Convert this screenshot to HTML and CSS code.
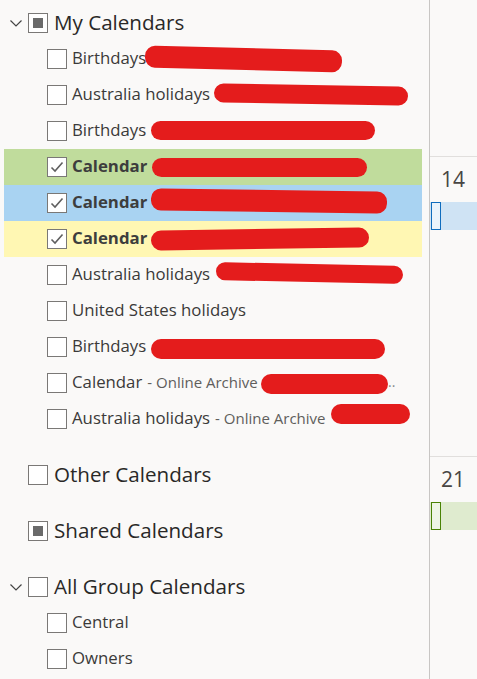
FILE: index.html
```html
<!DOCTYPE html>
<html lang="en">
<head>
  <meta charset="UTF-8">
  <title>Calendars</title>
  <link rel="stylesheet" href="styles.css">
</head>
<body>
  <div class="app">
    <aside class="folders">
      <div class="head">
        <span class="chev"><svg width="14" height="9" viewBox="0 0 14 9"><path d="M1.5 1.5 L7 7 L12.5 1.5" fill="none" stroke="#444" stroke-width="1.2"/></svg></span>
        <span class="box part"></span>
        <span class="head-label">My Calendars</span>
      </div>
      <div class="row">
        <span class="box"></span><span class="label">Birthdays</span>
        <span class="redact r1"></span>
      </div>
      <div class="row">
        <span class="box"></span><span class="label">Australia holidays</span>
        <span class="redact r2"></span>
      </div>
      <div class="row">
        <span class="box"></span><span class="label">Birthdays</span>
        <span class="redact r3"></span>
      </div>
      <div class="row green">
        <span class="box checked"><svg width="14" height="12" viewBox="0 0 14 12"><path d="M1.5 6.5 L5 10 L12.5 1.5" fill="none" stroke="#5f5f5f" stroke-width="1.6"/></svg></span><span class="label bold">Calendar</span>
        <span class="redact r4"></span>
      </div>
      <div class="row blue">
        <span class="box checked"><svg width="14" height="12" viewBox="0 0 14 12"><path d="M1.5 6.5 L5 10 L12.5 1.5" fill="none" stroke="#5f5f5f" stroke-width="1.6"/></svg></span><span class="label bold">Calendar</span>
        <span class="redact r5"></span>
      </div>
      <div class="row yellow">
        <span class="box checked"><svg width="14" height="12" viewBox="0 0 14 12"><path d="M1.5 6.5 L5 10 L12.5 1.5" fill="none" stroke="#5f5f5f" stroke-width="1.6"/></svg></span><span class="label bold">Calendar</span>
        <span class="redact r6"></span>
      </div>
      <div class="row">
        <span class="box"></span><span class="label">Australia holidays</span>
        <span class="redact r7"></span>
      </div>
      <div class="row">
        <span class="box"></span><span class="label">United States holidays</span>
      </div>
      <div class="row">
        <span class="box"></span><span class="label">Birthdays</span>
        <span class="redact r8"></span>
      </div>
      <div class="row">
        <span class="box"></span><span class="label">Calendar</span><span class="sub">- Online Archive</span>
        <span class="redact r9"></span><span class="dots">..</span>
      </div>
      <div class="row">
        <span class="box"></span><span class="label">Australia holidays</span><span class="sub">- Online Archive</span>
        <span class="redact r10"></span>
      </div>

      <div class="head gap">
        <span class="chev"></span>
        <span class="box"></span>
        <span class="head-label">Other Calendars</span>
      </div>
      <div class="head gap">
        <span class="chev"></span>
        <span class="box part"></span>
        <span class="head-label">Shared Calendars</span>
      </div>
      <div class="head gap">
        <span class="chev"><svg width="14" height="9" viewBox="0 0 14 9"><path d="M1.5 1.5 L7 7 L12.5 1.5" fill="none" stroke="#444" stroke-width="1.2"/></svg></span>
        <span class="box"></span>
        <span class="head-label">All Group Calendars</span>
      </div>
      <div class="row">
        <span class="box"></span><span class="label">Central</span>
      </div>
      <div class="row">
        <span class="box"></span><span class="label">Owners</span>
      </div>
    </aside>

    <section class="month">
      <div class="week-top"></div>
      <div class="day">
        <div class="num">14</div>
        <div class="event ev-blue"><span class="ev-mark"></span></div>
      </div>
      <div class="day last">
        <div class="num">21</div>
        <div class="event ev-green"><span class="ev-mark"></span></div>
      </div>
    </section>
  </div>
</body>
</html>
```

FILE: styles.css
```css
* { box-sizing: border-box; margin: 0; padding: 0; }
body {
  font-family: 'Open Sans', 'Noto Sans', sans-serif;
  background: #faf9f8;
  color: #323130;
  overflow: hidden;
}

.app {
  display: flex;
  height: 679px;
  overflow: hidden;
}

/* folder pane */
.folders {
  width: 430px;
  border-right: 1px solid #c8c6c4;
  padding-top: 5px;
}

.head {
  display: flex;
  align-items: center;
  height: 36px;
}
.head.gap { margin-top: 20px; }
.chev {
  width: 28px;
  display: flex;
  justify-content: flex-end;
  padding-right: 5px;
}
.head-label {
  margin-left: 6px;
  margin-bottom: 2px;
  font-size: 20.6px;
  color: #292827;
  white-space: nowrap;
}

.box {
  width: 20px;
  height: 20px;
  border: 1px solid #7a7876;
  background: #fff;
  flex-shrink: 0;
  display: flex;
  align-items: center;
  justify-content: center;
}
.box.part::after {
  content: '';
  width: 10px;
  height: 10px;
  background: #6a6a6a;
}

.row {
  position: relative;
  display: flex;
  align-items: center;
  height: 36px;
  width: 418px;
  margin-left: 4px;
  padding-left: 43px;
  white-space: nowrap;
}
.row.green { background: #c0dc9c; }
.row.blue { background: #a9d3f2; }
.row.yellow { background: #fff7b3; }

.label {
  margin-left: 5px;
  margin-bottom: 3px;
  font-size: 16.8px;
  color: #3b3a39;
}
.label.bold {
  font-weight: 700;
  color: #3d3d3d;
}
.sub {
  margin-left: 5px;
  margin-bottom: 2px;
  font-size: 15px;
  color: #605e5c;
}
.dots {
  position: absolute;
  left: 384px;
  top: 7px;
  font-size: 14px;
  color: #888;
}

/* redaction strokes drawn over the names */
.redact {
  position: absolute;
  height: 20px;
  border-radius: 10px;
  background: #e41c1c;
}
.r1 { left: 141px; top: 7px; width: 197px; height: 22px; transform: rotate(1.5deg); }
.r2 { left: 210px; top: 8px; width: 194px; height: 19px; transform: rotate(1deg); }
.r3 { left: 147px; top: 8px; width: 224px; height: 19px; }
.r4 { left: 148px; top: 9px; width: 215px; height: 19px; }
.r5 { left: 147px; top: 5px; width: 236px; height: 22px; transform: rotate(0.8deg); }
.r6 { left: 147px; top: 8px; width: 218px; height: 20px; transform: rotate(-0.8deg); }
.r7 { left: 212px; top: 7px; width: 187px; height: 18px; transform: rotate(1.2deg); }
.r8 { left: 147px; top: 10px; width: 234px; height: 20px; }
.r9 { left: 257px; top: 9px; width: 127px; height: 20px; }
.r10 { left: 327px; top: 3px; width: 79px; height: 20px; }

/* month strip */
.month {
  flex: 1;
  display: flex;
  flex-direction: column;
}
.week-top {
  height: 157px;
  border-bottom: 1px solid #e1dfdd;
}
.day {
  height: 300px;
  border-bottom: 1px solid #e1dfdd;
  padding-top: 9px;
}
.day.last {
  height: auto;
  flex: 1;
  border-bottom: none;
}
.num {
  padding-left: 11px;
  font-size: 21px;
  line-height: 26px;
  color: #484644;
}
.event {
  margin-top: 10px;
  height: 28px;
  padding-left: 1px;
}
.ev-mark {
  display: block;
  width: 10px;
  height: 28px;
}
.ev-blue { background: #cfe3f4; }
.ev-blue .ev-mark { border: 1px solid #0f6cbd; background: #eaf3fb; }
.ev-green { background: #dfebcf; }
.ev-green .ev-mark { border: 1px solid #498205; background: #eef5e6; }
```
